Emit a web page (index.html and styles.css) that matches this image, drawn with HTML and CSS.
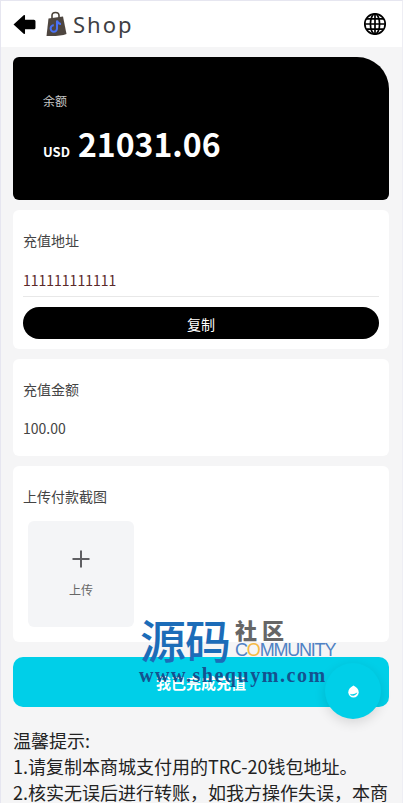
FILE: index.html
```html
<!DOCTYPE html>
<html lang="zh">
<head>
<meta charset="utf-8">
<title>Shop</title>
<link rel="stylesheet" href="styles.css">
</head>
<body>
<div class="page">
  <header class="top">
    <div class="top-left">
      <svg class="back" viewBox="0 0 22 20"><path d="M0.5 10 L10.5 0.8 L11.5 1.2 V5.5 H20 Q21.5 5.5 21.5 7 V13 Q21.5 14.5 20 14.5 H11.5 V18.8 L10.5 19.2 Z" fill="#000"/></svg>
      <svg class="bag" viewBox="0 0 22 26">
        <path d="M7 8 V4.5 Q7 1.5 10.5 1.5 Q14 1.5 14 4.5 V7" fill="none" stroke="#4a4238" stroke-width="1.6"/>
        <path d="M3.5 7.5 L18 5.5 L21.5 23 Q15 25.5 1.5 25 Z" fill="#4e4640"/>
        <path d="M12 9.5 V17.5 A3.2 3.2 0 1 1 8.8 14.3 M12 9.5 Q13 13 16 13" fill="none" stroke="#4a72f5" stroke-width="2"/>
      </svg>
      <span class="brand">Shop</span>
    </div>
    <svg class="globe" viewBox="0 0 24 24" fill="none" stroke="#000" stroke-width="1.7">
      <circle cx="12" cy="12" r="10.2"/>
      <ellipse cx="12" cy="12" rx="4.6" ry="10.2"/>
      <path d="M12 1.8 V22.2 M1.8 12 H22.2 M3.4 6.8 H20.6 M3.4 17.2 H20.6"/>
    </svg>
  </header>

  <main class="content">
    <section class="balance">
      <div class="balance-label">余额</div>
      <div class="balance-row"><span class="currency">USD</span><span class="amount">21031.06</span></div>
    </section>

    <section class="card card-address">
      <div class="label">充值地址</div>
      <div class="address">111111111111</div>
      <button class="copy">复制</button>
    </section>

    <section class="card card-amount">
      <div class="label">充值金额</div>
      <div class="value">100.00</div>
    </section>

    <section class="card card-upload">
      <div class="label">上传付款截图</div>
      <div class="upload">
        <svg class="plus" viewBox="0 0 18 18"><path d="M9 0.5 V17.5 M0.5 9 H17.5" stroke="#5f5f63" stroke-width="2"/></svg>
        <span class="upload-text">上传</span>
      </div>
    </section>

    <button class="submit">我已完成充值</button>

    <section class="notes">
      <p>温馨提示:</p>
      <p>1.请复制本商城支付用的TRC-20钱包地址。</p>
      <p>2.核实无误后进行转账，如我方操作失误，本商城概不负责。</p>
    </section>
  </main>

  <div class="fab">
    <svg class="drop" viewBox="0 0 12 12"><path d="M6 0.5 Q10.8 3 10.8 6.8 A4.8 4.8 0 0 1 1.2 6.8 Q1.2 3 6 0.5 Z" fill="#fff"/><path d="M2.6 8 Q6 9.4 9.4 7 Q9.6 8.4 6 10 Q3.4 10 2.6 8 Z" fill="#00cfe8"/></svg>
  </div>

  <div class="mark">
    <div class="mark-top">
      <span class="mark-big">源码</span>
      <div class="mark-side">
        <span class="mark-cn">社区</span>
        <span class="mark-en">C<span class="mark-o">O</span>MMUNITY</span>
      </div>
    </div>
    <div class="mark-url">www.shequym.com</div>
  </div>
</div>
</body>
</html>
```

FILE: styles.css
```css
* { box-sizing: border-box; }
html, body { margin: 0; height: 100%; overflow: hidden; }
body {
  background: #f5f5f6;
  font-family: "Noto Sans CJK SC", "Noto Sans", sans-serif;
  color: #333;
}
.page {
  position: relative;
  height: 803px;
  overflow: hidden;
  border-top: 1px solid #e6e6f0;
  border-left: 1px solid #e6e6f0;
  border-right: 1px solid #eeeef4;
}
.top {
  height: 46px;
  background: #fff;
  display: flex;
  align-items: center;
  justify-content: space-between;
  padding: 0 15px 0 12px;
}
.top-left { display: flex; align-items: center; }
.back { width: 23px; height: 21px; margin-right: 9px; }
.bag { width: 22px; height: 26px; margin-right: 6px; }
.brand { font-family: "Noto Sans", sans-serif; font-size: 22px; letter-spacing: 2px; color: #3f3f44; line-height: 30px; }
.globe { width: 24px; height: 24px; }
.content { padding: 10px 13px 0 12px; }
.balance {
  height: 143px;
  background: #000;
  border-radius: 6px 32px 6px 6px;
  padding: 35px 30px 0;
  color: #fff;
}
.balance-label { font-size: 12px; line-height: 18px; color: #c8c8c8; }
.balance-row { display: flex; align-items: baseline; margin-top: 9px; line-height: 48px; }
.currency { font-size: 13px; font-weight: 700; margin-right: 8px; }
.amount { font-size: 32px; font-weight: 700; }
.card { background: #fff; border-radius: 6px; margin-top: 10px; padding: 0 10px; }
.label { font-size: 14px; color: #444; line-height: 20px; }
.card-address { height: 139px; padding-top: 20px; }
.address {
  margin-top: 11px;
  height: 36px;
  line-height: 38px;
  font-size: 14px;
  color: #5b2a2a;
  border-bottom: 1px solid #e8e8e8;
}
.copy {
  display: block;
  width: 100%;
  height: 32px;
  margin-top: 10px;
  background: #000;
  color: #fff;
  border: 0;
  border-radius: 16px;
  font: 400 14px "Noto Sans CJK SC", sans-serif;
  padding-top: 3px;
}
.card-amount { height: 97px; padding-top: 20px; }
.value { margin-top: 18px; font-size: 14px; line-height: 22px; color: #444; }
.card-upload { height: 176px; padding-top: 20px; }
.upload {
  width: 106px;
  height: 106px;
  margin: 15px 0 0 5px;
  background: #f4f5f7;
  border-radius: 6px;
  display: flex;
  flex-direction: column;
  align-items: center;
  padding-top: 29px;
}
.plus { width: 18px; height: 18px; }
.upload-text { font-size: 12px; color: #666; line-height: 18px; margin-top: 13px; }
.submit {
  display: block;
  width: 100%;
  height: 50px;
  margin-top: 15px;
  background: #00cfe8;
  color: #fff;
  border: 0;
  border-radius: 10px;
  font: 700 15px "Noto Sans CJK SC", sans-serif;
}
.notes { margin-top: 20px; font-size: 18px; line-height: 26px; color: #222; }
.notes p { margin: 0; }
.fab {
  position: absolute;
  left: 324px;
  top: 662px;
  width: 56px;
  height: 56px;
  border-radius: 50%;
  background: #00cfe8;
  box-shadow: 0 4px 12px rgba(0,0,0,.12);
  display: flex;
  align-items: center;
  justify-content: center;
}
.drop { width: 13px; height: 13px; }
.mark { position: absolute; left: 139px; top: 613px; width: 200px; pointer-events: none; }
.mark-top { display: flex; align-items: flex-start; height: 48px; }
.mark-big { font-size: 46px; line-height: 48px; color: #1c6cb8; font-weight: 500; letter-spacing: -1px; width: 95px; white-space: nowrap; }
.mark-side { display: flex; flex-direction: column; margin-top: 3px; }
.mark-cn { font-size: 22px; line-height: 24px; font-weight: 900; color: #666; letter-spacing: 5px; }
.mark-en { font: 400 18px/18px "Liberation Sans", sans-serif; color: #4f82c4; letter-spacing: -1.2px; white-space: nowrap; }
.mark-o { color: #f5b942; }
.mark-url { margin: 3px 0 0 -1px; font: 700 20px/20px "Liberation Serif", serif; color: #14528f; letter-spacing: 1.55px; white-space: nowrap; }
```
